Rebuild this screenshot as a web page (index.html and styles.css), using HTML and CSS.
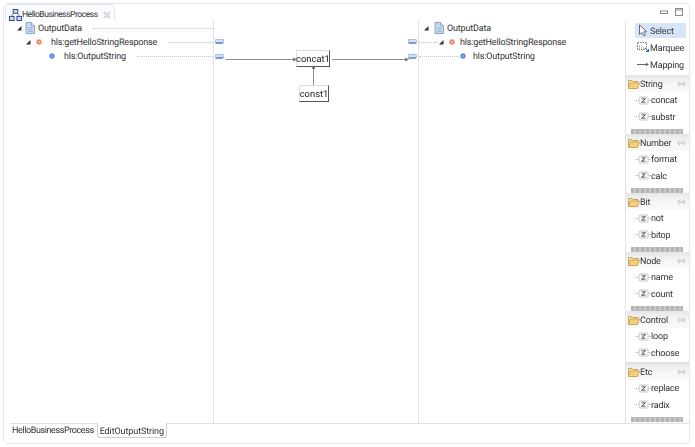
FILE: index.html
```html
<!DOCTYPE html>
<html lang="en">
<head>
<meta charset="utf-8">
<title>HelloBusinessProcess</title>
<link rel="stylesheet" href="styles.css">
</head>
<body>
<svg class="defs" width="0" height="0" aria-hidden="true">
  <symbol id="i-arrow" viewBox="0 0 6 6"><path d="M5.5 1 V5.5 H1 Z" fill="#333"/></symbol>
  <symbol id="i-doc" viewBox="0 0 10 12"><path d="M1 .5 H6.5 L9.5 3.5 V11.5 H1 Z" fill="#c9d9ee" stroke="#8fa6c6"/><path d="M6.5 .5 V3.5 H9.5" fill="#eef3fa" stroke="#8fa6c6"/><path d="M3 5.5 H7.5 M3 7.5 H7.5 M3 9.5 H7.5" stroke="#9db3d2"/></symbol>
  <symbol id="i-el" viewBox="0 0 8 8"><circle cx="4" cy="4" r="2.6" fill="#ee7b54" stroke="#f4bba6"/><circle cx="4" cy="4" r="1" fill="#f8c9b4"/></symbol>
  <symbol id="i-at" viewBox="0 0 8 8"><circle cx="4" cy="4" r="2.6" fill="#3f78d8" stroke="#a9c4ee"/><circle cx="4" cy="4" r="1" fill="#a8c6f2"/></symbol>
  <symbol id="i-folder" viewBox="0 0 12 10"><path d="M.5 9 V1.5 H4 L5 2.5 H10 V4" fill="#f3dfa6" stroke="#c9a658"/><path d="M.5 9.5 L2.5 4 H11.5 L9.5 9.5 Z" fill="#f6d080" stroke="#c9a658"/></symbol>
  <symbol id="i-fn" viewBox="0 0 15 9"><path d="M0 4.5 H2.5 M12.5 4.5 H15" stroke="#999" stroke-dasharray="1 1"/><rect x="3" y="1" width="9" height="7" rx="1" fill="#fff" stroke="#c4c4c4"/><path d="M5.5 2.8 H9.5 L5.5 6.2 H9.5" fill="none" stroke="#555"/></symbol>
  <symbol id="i-collapse" viewBox="0 0 9 6"><path d="M3 .8 L.8 3 L3 5.2 M6 .8 L8.2 3 L6 5.2 M3 3 H6" fill="none" stroke="#b0b0b0"/></symbol>
</svg>

<div class="window">
  <header class="tabbar">
    <div class="edtab">
      <svg class="edtab-icon" viewBox="0 0 14 13" width="13" height="12"><path d="M7 2.5 L3 7 M7 2.5 L11 7 M3 7 V9 M11 7 V9" fill="none" stroke="#5b6ea8"/><rect x="4.5" y=".5" width="5" height="4" fill="#cbd8f0" stroke="#32408c"/><rect x=".5" y="8" width="5" height="4.5" fill="#cbd8f0" stroke="#32408c"/><rect x="8.5" y="8" width="5" height="4.5" fill="#cbd8f0" stroke="#32408c"/></svg>
      <span class="edtab-label">HelloBusinessProcess</span>
      <svg class="edtab-close" viewBox="0 0 8 8" width="8" height="8"><path d="M1 1 L7 7 M7 1 L1 7" stroke="#b4b4b4" stroke-width="1.6" fill="none"/><path d="M1 1 L7 7 M7 1 L1 7" stroke="#fff" stroke-width=".6" fill="none"/></svg>
    </div>
    <div class="winctl">
      <svg viewBox="0 0 8 5" width="8" height="5"><rect x=".5" y="1" width="7" height="2.5" fill="#fff" stroke="#8a8a8a"/></svg>
      <svg viewBox="0 0 8 8" width="8" height="8"><rect x=".5" y=".5" width="7" height="7" fill="#fff" stroke="#8a8a8a"/><path d="M.5 2 H7.5" stroke="#8a8a8a"/></svg>
    </div>
  </header>

  <main class="body">
    <div class="editor">
      <section class="tree tree-left">
        <div class="row row-l0"><svg class="tw"><use href="#i-arrow"/></svg><svg class="doc"><use href="#i-doc"/></svg><span>OutputData</span><i class="lead"></i></div>
        <div class="row row-l1"><svg class="tw"><use href="#i-arrow"/></svg><svg class="dot"><use href="#i-el"/></svg><span>hls:getHelloStringResponse</span><i class="lead"></i></div>
        <div class="row row-l2"><svg class="dot"><use href="#i-at"/></svg><span>hls:OutputString</span><i class="lead"></i></div>
      </section>

      <section class="canvas">
        <svg class="wires" width="205" height="403" viewBox="0 0 205 403">
          <g fill="none" stroke="#8f8f8f">
            <path d="M12 38.5 H80"/>
            <path d="M118 38.5 H192"/>
            <path d="M99.5 65 V47"/>
          </g>
          <g fill="#777">
            <path d="M83 38.5 L79 36.5 V40.5 Z"/>
            <path d="M195 38.5 L191 36.5 V40.5 Z"/>
            <path d="M99.5 44 L97.5 48 H101.5 Z"/>
          </g>
        </svg>
        <b class="handle h-l1"></b><b class="handle h-l2"></b>
        <b class="handle h-r1"></b><b class="handle h-r2"></b>
        <div class="node n-concat">concat1</div>
        <div class="node n-const">const1</div>
      </section>

      <section class="tree tree-right">
        <div class="row rr-0"><svg class="tw"><use href="#i-arrow"/></svg><svg class="doc"><use href="#i-doc"/></svg><span>OutputData</span></div>
        <div class="row"><i class="lead lead-a"></i><svg class="tw"><use href="#i-arrow"/></svg><svg class="dot"><use href="#i-el"/></svg><span>hls:getHelloStringResponse</span></div>
        <div class="row"><i class="lead lead-b"></i><svg class="dot"><use href="#i-at"/></svg><span>hls:OutputString</span></div>
      </section>
    </div>

    <aside class="palette">
      <div class="tools">
        <div class="tool tool-on">
          <svg viewBox="0 0 10 13" width="10" height="13"><path d="M1.5 1 V10.5 L4 8.5 L6 12 L7.5 11 L5.8 7.8 H8.8 Z" fill="#fff" stroke="#667"/></svg>
          <span>Select</span>
        </div>
        <div class="tool">
          <svg viewBox="0 0 12 11" width="12" height="11"><rect x=".5" y=".5" width="9" height="7" fill="none" stroke="#777" stroke-dasharray="1.5 1"/><path d="M2 4 H5 M2 6 H7" stroke="#d98a3a" stroke-dasharray="1 1"/><path d="M8 6 L11.5 9.5 M11.5 7 V9.5 H9" fill="none" stroke="#2d5fa8"/></svg>
          <span>Marquee</span>
        </div>
        <div class="tool">
          <svg viewBox="0 0 12 5" width="12" height="5"><path d="M0 2.5 H10" stroke="#666"/><path d="M12 2.5 L9 .8 V4.2 Z" fill="#666"/></svg>
          <span>Mapping</span>
        </div>
      </div>

      <section class="drawer">
        <div class="dhead"><svg class="folder"><use href="#i-folder"/></svg><span>String</span><svg class="coll"><use href="#i-collapse"/></svg></div>
        <div class="entry"><svg class="fn"><use href="#i-fn"/></svg><span>concat</span></div>
        <div class="entry"><svg class="fn"><use href="#i-fn"/></svg><span>substr</span></div>
        <div class="strip"></div>
      </section>
      <section class="drawer">
        <div class="dhead"><svg class="folder"><use href="#i-folder"/></svg><span>Number</span><svg class="coll"><use href="#i-collapse"/></svg></div>
        <div class="entry"><svg class="fn"><use href="#i-fn"/></svg><span>format</span></div>
        <div class="entry"><svg class="fn"><use href="#i-fn"/></svg><span>calc</span></div>
        <div class="strip"></div>
      </section>
      <section class="drawer">
        <div class="dhead"><svg class="folder"><use href="#i-folder"/></svg><span>Bit</span><svg class="coll"><use href="#i-collapse"/></svg></div>
        <div class="entry"><svg class="fn"><use href="#i-fn"/></svg><span>not</span></div>
        <div class="entry"><svg class="fn"><use href="#i-fn"/></svg><span>bitop</span></div>
        <div class="strip"></div>
      </section>
      <section class="drawer">
        <div class="dhead"><svg class="folder"><use href="#i-folder"/></svg><span>Node</span><svg class="coll"><use href="#i-collapse"/></svg></div>
        <div class="entry"><svg class="fn"><use href="#i-fn"/></svg><span>name</span></div>
        <div class="entry"><svg class="fn"><use href="#i-fn"/></svg><span>count</span></div>
        <div class="strip"></div>
      </section>
      <section class="drawer drawer-nostrip">
        <div class="dhead"><svg class="folder"><use href="#i-folder"/></svg><span>Control</span><svg class="coll"><use href="#i-collapse"/></svg></div>
        <div class="entry"><svg class="fn"><use href="#i-fn"/></svg><span>loop</span></div>
        <div class="entry"><svg class="fn"><use href="#i-fn"/></svg><span>choose</span></div>
      </section>
      <section class="drawer">
        <div class="dhead"><svg class="folder"><use href="#i-folder"/></svg><span>Etc</span><svg class="coll"><use href="#i-collapse"/></svg></div>
        <div class="entry"><svg class="fn"><use href="#i-fn"/></svg><span>replace</span></div>
        <div class="entry"><svg class="fn"><use href="#i-fn"/></svg><span>radix</span></div>
        <div class="strip"></div>
      </section>
    </aside>
  </main>

  <footer class="pages">
    <div class="page">HelloBusinessProcess</div>
    <div class="page page-on">EditOutputString</div>
  </footer>
</div>
</body>
</html>
```
FILE: styles.css
```css
* { box-sizing: border-box; }
html, body { margin: 0; padding: 0; }
body {
  width: 695px;
  height: 447px;
  overflow: hidden;
  background: #fff;
  font-family: Roboto, "Open Sans", sans-serif;
  font-size: 9px;
  letter-spacing: -0.17px;
  text-rendering: geometricPrecision;
  color: #333;
}
.defs { position: absolute; }

.window {
  margin: 3px 0 0 3px;
  width: 687px;
  height: 441px;
  border: 1px solid #e2e8f3;
  border-radius: 5px;
  display: flex;
  flex-direction: column;
  background: #fff;
  filter: blur(0.3px);
}

/* top tabs */
.tabbar {
  height: 16px;
  display: flex;
  align-items: flex-start;
  justify-content: space-between;
  flex: none;
}
.edtab {
  width: 110px;
  height: 17px;
  margin-left: 1px;
  padding: 3px 0 0 3px;
  display: flex;
  align-items: center;
  border: 1px solid #e3e6ee;
  border-bottom: 0;
  border-radius: 5px 5px 0 0;
  background: #fbfcfe;
}
.edtab-icon { flex: none; }
.edtab-label { font-size: 8.5px; letter-spacing: -0.45px; white-space: nowrap; padding-top: 1px; }
.edtab-close { margin-left: 5px; flex: none; }
.winctl {
  display: flex;
  align-items: center;
  gap: 7px;
  padding: 4px 6px 0 0;
}

/* main area */
.body {
  flex: 1;
  min-height: 0;
  display: flex;
}
.editor {
  width: 621px;
  display: flex;
}
.tree { padding-top: 1px; }
.tree-left {
  width: 209px;
  flex: none;
  padding-left: 12px;
}
.tree-right {
  flex: 1;
  border-left: 1px solid #e2e2e2;
}
.canvas {
  position: relative;
  width: 205px;
  flex: none;
  margin-top: 1px;
  border-left: 1px solid #e2e2e2;
}
.row {
  height: 14px;
  display: flex;
  align-items: center;
  white-space: nowrap;
}
.row span, .tool span, .dhead span, .entry span { padding-top: 2px; }
.row-l1 { padding-left: 9px; }
.row-l2 { padding-left: 32px; }
.tw { width: 6px; height: 6px; flex: none; margin-right: 3px; }
.doc { width: 10px; height: 12px; flex: none; margin-right: 3px; }
.dot { width: 8px; height: 8px; flex: none; margin-right: 4px; }
.row-l1 .tw { margin-right: 4px; }
.row-l1 .dot { margin-right: 8px; }
.row-l2 .dot { margin-right: 8px; }
.lead {
  flex: 1;
  height: 0;
  margin-left: 11px;
  border-top: 1px dotted #c4c4c4;
}
.rr-0 { padding-left: 4px; }
.rr-0 .tw { margin-right: 5px; }
.rr-0 .doc { margin-right: 3px; }
.lead-a { flex: none; width: 19px; margin: 0; }
.lead-b { flex: none; width: 40px; margin: 0; }
.tree-right .row:nth-child(2) .tw { margin-right: 4px; }
.tree-right .row:nth-child(2) .dot { margin-right: 4px; }
.tree-right .row:nth-child(3) .dot { margin-right: 6px; }

/* diagram items */
.wires { position: absolute; left: 0; top: 0; }
.handle {
  position: absolute;
  width: 9px;
  height: 5px;
  background: #d5e2f5;
  border: 1px solid #a9bfe0;
  border-bottom: 2px solid #7f9ccb;
  border-radius: 1px 2px 2px 1px;
}
.h-l1 { left: 1px; top: 18px; }
.h-l2 { left: 1px; top: 33px; }
.h-r1 { left: 194px; top: 18px; }
.h-r2 { left: 194px; top: 33px; }
.node {
  position: absolute;
  display: flex;
  align-items: center;
  justify-content: center;
  height: 17px;
  padding-top: 1px;
  background: #fff;
  border: 1px solid #dcdcdc;
  border-right-color: #555;
  border-bottom-color: #555;
  font-size: 9.4px;
  letter-spacing: 0;
  color: #222;
}
.n-concat { left: 82px; top: 29px; width: 34px; }
.n-const { left: 85px; top: 64px; width: 30px; }

/* palette */
.palette {
  flex: 1;
  margin-top: 1px;
  border-left: 1px solid #e2e2e2;
  display: flex;
  flex-direction: column;
}
.tools { height: 54px; padding: 2px 0 0 9px; }
.tool {
  height: 15px;
  margin-bottom: 2px;
  display: flex;
  align-items: center;
  gap: 1px;
  padding-left: 2px;
  width: 51px;
  white-space: nowrap;
}
.tool svg { flex: none; width: 12px; }
.tool-on { background: #d7e5f8; }
.drawer { height: 59px; flex: none; }
.drawer-nostrip { height: 52px; border-bottom: 1px solid #dcdcdc; }
.dhead {
  height: 17px;
  display: flex;
  align-items: center;
  padding-left: 2px;
  background: linear-gradient(#e6e6e6, #f6f6f6 50%, #f9f9f9);
}
.folder { width: 12px; height: 10px; flex: none; margin-right: 0; }
.coll { width: 9px; height: 6px; margin-left: auto; margin-right: 3px; flex: none; }
.entry {
  height: 16.5px;
  display: flex;
  align-items: center;
  padding-left: 10px;
}
.fn { width: 15px; height: 9px; flex: none; margin-right: 0; }
.strip {
  height: 5px;
  margin: 4px 6px 0 5px;
  background: repeating-linear-gradient(90deg, #b4b4b4 0 3px, #c9c9c9 3px 5px);
}

/* bottom page tabs */
.pages {
  height: 20px;
  flex: none;
  margin-left: 6px;
  display: flex;
  border-top: 1px solid #e0e0e0;
  align-items: flex-start;
}
.page {
  padding: 0 3px 0 2px;
  height: 14px;
  line-height: 15px;
  letter-spacing: -0.4px;
  white-space: nowrap;
}
.page-on {
  height: 15px;
  padding: 0 2px;
  margin-top: -1px;
  line-height: 16px;
  letter-spacing: -0.1px;
  background: #fff;
  border: 1px solid #cfcfcf;
  border-top-color: #fff;
  border-radius: 0 0 3px 3px;
}
```
